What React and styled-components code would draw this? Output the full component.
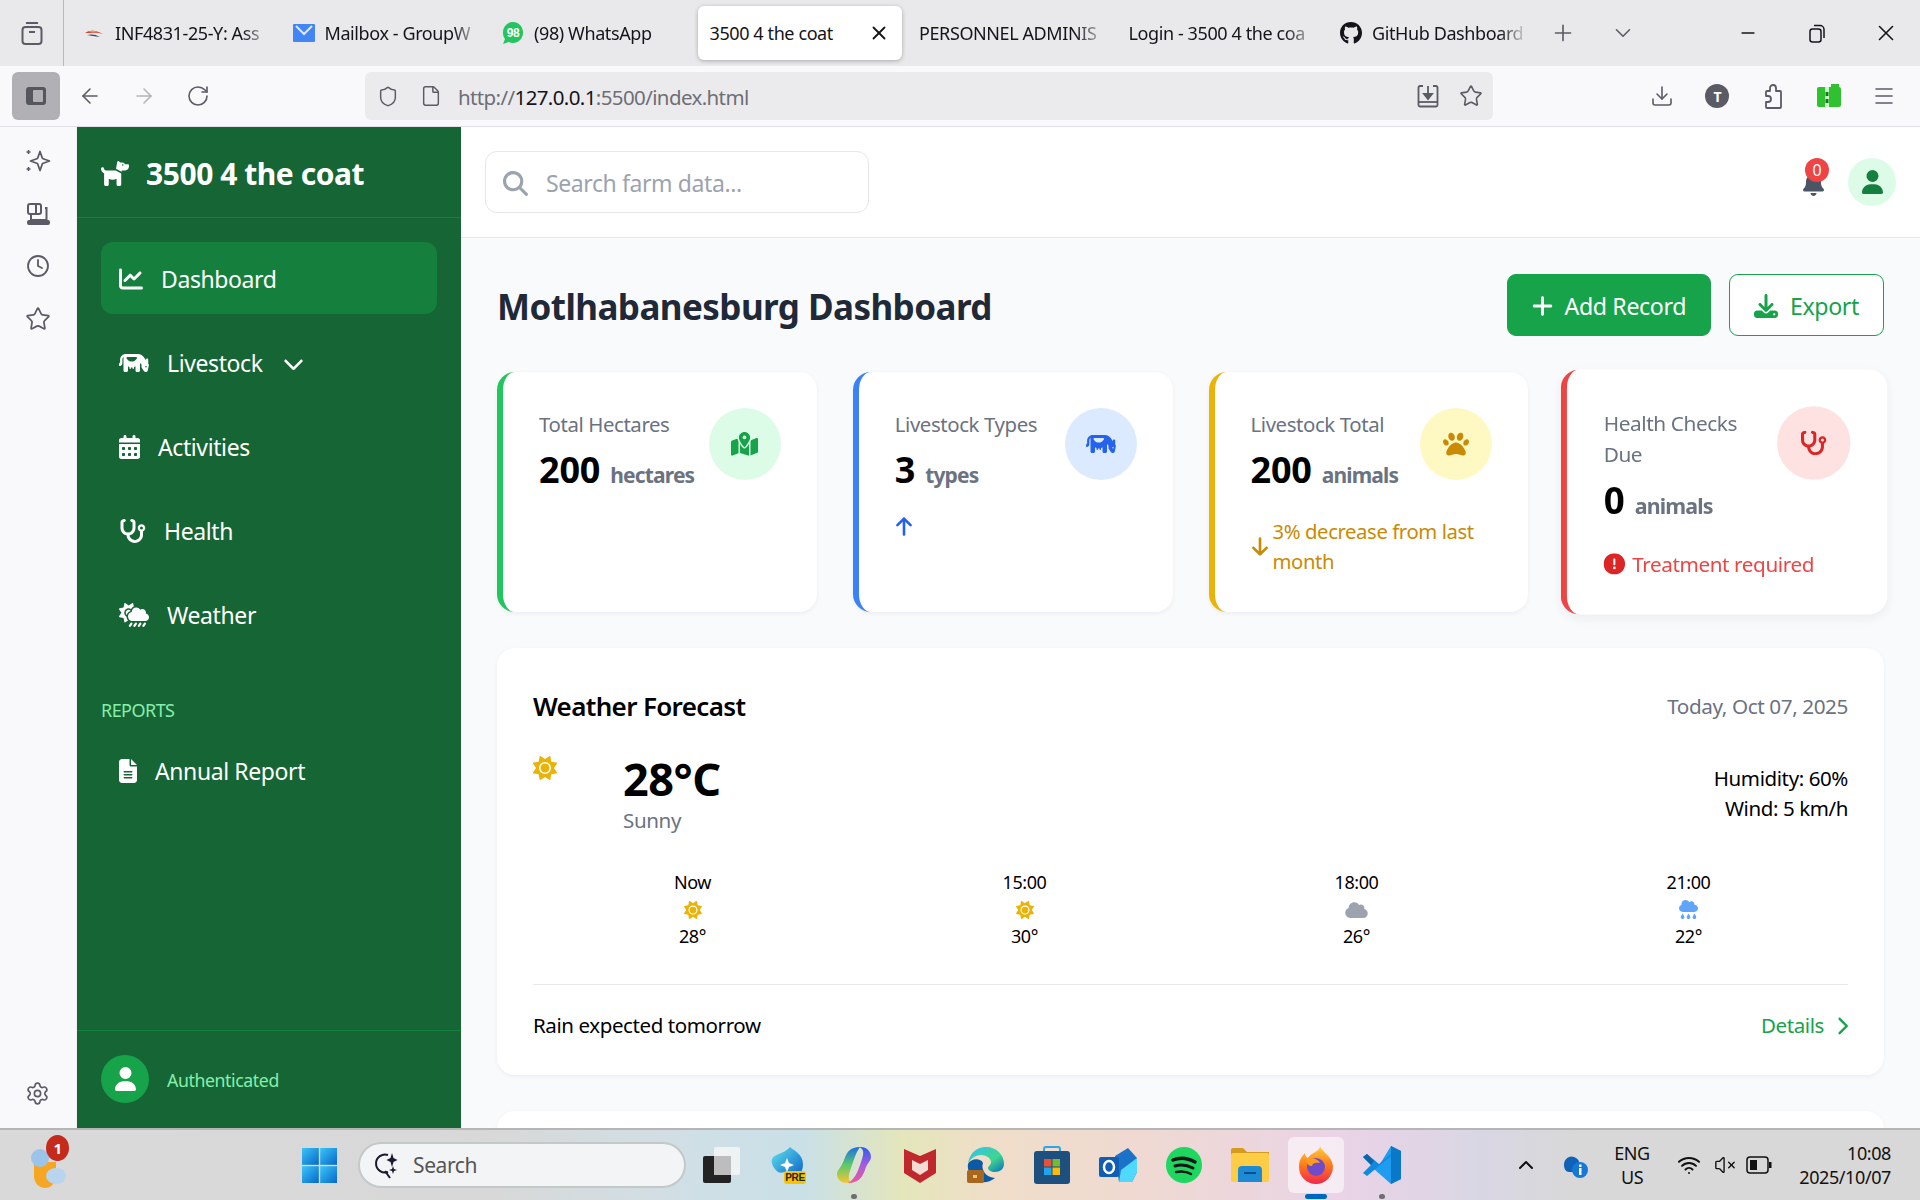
import React from "react";
import styled, { createGlobalStyle } from "styled-components";
import {
  FaDog, FaChartLine, FaChevronDown, FaCalendarDays, FaCloudSunRain, FaFileLines, FaUser, FaMagnifyingGlass,
  FaBell, FaPlus, FaDownload, FaPaw, FaSun, FaCloud, FaCloudRain, FaChevronRight, FaCircleExclamation, FaGithub,
  FaCow, FaStethoscope, FaMapLocationDot, FaArrowUp, FaArrowDown,
} from "react-icons/fa6";
import { ArrowLeft, ArrowRight, RotateCw, Shield, File, Star, Download, Menu, Clock, Settings, Plus, ChevronDown, X, Minus, ChevronUp, Wifi, VolumeX } from "lucide-react";

const FONT = `"Noto Sans", "Open Sans", sans-serif`;

const Global = createGlobalStyle`
  html, body { margin: 0; padding: 0; height: 1200px; overflow: hidden; }
  body { font-family: ${FONT}; letter-spacing: -0.025em; color: #000; }
  * { box-sizing: border-box; }
`;

const Screen = styled.div`
  width: 1920px; height: 1200px; display: flex; flex-direction: column; overflow: hidden;
`;

/* ---------- browser chrome ---------- */
const TabBar = styled.div`
  height: 66px; flex: none; background: #e9e9ec; display: flex; align-items: stretch; color: #15141a; font-size: 18px;
`;
const TabsButton = styled.div`
  width: 64px; flex: none; display: flex; align-items: center; justify-content: center;
  border-right: 1px solid #b9b9be; color: #5b5b66; margin-right: 5px;
`;
const Tabs = styled.div`
  display: flex; align-items: center; gap: 5.5px; margin-right: 3px;
`;
const Tab = styled.div`
  width: 204px; height: 54px; flex: none; display: flex; align-items: center; gap: 10px;
  padding: 0 ${p => (p.$active ? 12 : 2)}px 0 ${p => (p.$icon ? 14 : 12)}px;
  border-radius: 6px;
  ${p => p.$active && `background:#fff; box-shadow:0 1px 4px rgba(0,0,0,.28);`}
`;
const TabLabel = styled.span`
  flex: 1; white-space: nowrap; overflow: hidden;
  ${p => !p.$active && `-webkit-mask-image: linear-gradient(to right,#000 82%,transparent 100%); mask-image: linear-gradient(to right,#000 82%,transparent 100%);`}
`;
const TabFavicon = styled.span`
  width: 22px; height: 24px; flex: none; display: flex; align-items: center; justify-content: center;
`;
const TabStripButton = styled.div`
  width: 60px; flex: none; display: flex; align-items: center; justify-content: center; color: #5b5b66;
`;
const WindowControls = styled.div`
  margin-left: auto; display: flex; align-items: center; color: #15141a;
`;
const WindowButton = styled.div`
  width: 69px; display: flex; justify-content: center; align-items: center;
`;
const NavBar = styled.div`
  height: 61px; flex: none; background: #f9f9fb; display: flex; align-items: center; color: #5b5b66;
  border-bottom: 1px solid #e0e0e6;
`;
const SideToggle = styled.div`
  width: 48px; height: 48px; margin-left: 12px; background: #b1b1b5; border-radius: 6px;
  display: flex; align-items: center; justify-content: center;
`;
const NavButton = styled.div`
  width: 54px; display: flex; justify-content: center; color: ${p => (p.$off ? "#b4b4b9" : "#5b5b66")};
`;
const NavButtons = styled.div`
  display: flex; margin-left: 3px;
`;
const AddressBar = styled.div`
  width: 1128px; height: 48px; margin-left: 140px; background: #ebebee; border-radius: 6px;
  display: flex; align-items: center; padding-left: 12px; color: #5b5b66;
`;
const AddressIcon = styled.span`
  width: 22px; display: flex; justify-content: center; margin-right: ${p => p.$gap || 0}px;
`;
const Url = styled.span`
  font-size: 20.5px; color: #6e6e75; letter-spacing: -0.03em; padding-top: 2px;
  b { font-weight: 400; color: #15141a; }
`;
const AddressEnd = styled.div`
  margin-left: auto; display: flex; gap: 19px; padding-right: 10px; align-items: center;
`;
const Toolbar = styled.div`
  margin-left: 141px; height: 48px; display: flex; align-items: center;
`;
const ToolButton = styled.div`
  width: 55.6px; display: flex; justify-content: center; align-items: center;
`;
const ProfileDot = styled.div`
  width: 24px; height: 24px; border-radius: 50%; background: #5b5b66; color: #fff; font-size: 14px; font-weight: 700;
  display: flex; align-items: center; justify-content: center;
`;

/* ---------- body ---------- */
const Body = styled.div`
  flex: 1; min-height: 0; display: flex; overflow: hidden;
`;
const Rail = styled.div`
  width: 77px; flex: none; background: #f9f9fb; display: flex; flex-direction: column; align-items: center;
  padding: 21px 2px 22px 0; gap: 28px; color: #5b5b66; box-shadow: inset -2px 0 2px -2px rgba(0,0,0,.12);
`;
const RailEnd = styled.div`
  margin-top: auto; display: flex;
`;
const Sidebar = styled.aside`
  width: 384px; flex: none; background: #166534; color: #fff; display: flex; flex-direction: column;
`;
const Brand = styled.div`
  height: 91px; flex: none; padding: 2px 24px 0; display: flex; align-items: center; gap: 17px; border-bottom: 1.5px solid #15803d;
  font-size: 30px; font-weight: 700; letter-spacing: -0.015em;
`;
const SideNav = styled.nav`
  padding: 24px; display: flex; flex-direction: column; gap: 12px;
`;
const NavItem = styled.div`
  height: 72px; padding: ${p => (p.$flat ? 0 : 2)}px 18px 0; border-radius: 12px; display: flex; align-items: center; gap: 18px; font-size: 23px;
  background: ${p => (p.$active ? "#15803d" : "transparent")};
`;
const NavCaret = styled.span`
  display: flex; margin-left: 2px;
`;
const SectionLabel = styled.div`
  font-size: 18px; line-height: 27px; color: #86efac; margin: 35px 0 -1px; letter-spacing: -0.03em;
`;
const SideFooter = styled.div`
  margin-top: auto; height: 98px; flex: none; border-top: 1.5px solid #15803d; padding: 24px; display: flex; align-items: flex-start; gap: 18px;
`;
const SideAvatar = styled.div`
  width: 48px; height: 48px; border-radius: 50%; background: #16a34a; display: flex; align-items: center; justify-content: center;
`;
const AuthText = styled.span`
  font-size: 17.7px; line-height: 50px; color: #86efac;
`;
const Glyph = styled.span`
  display: inline-flex; flex: none; color: ${p => p.$color || "inherit"};
  svg { width: ${p => p.$w}px; height: ${p => p.$h || p.$w}px; display: block; }
`;

const Main = styled.main`
  flex: 1; min-width: 0; display: flex; flex-direction: column; background: #f9fafb; overflow: hidden;
`;
const TopHeader = styled.header`
  height: 111px; flex: none; background: #fff; border-bottom: 1.5px solid #e5e7eb; padding: 24px 24px 0; display: flex; align-items: flex-start;
`;
const SearchBox = styled.div`
  width: 384px; height: 62px; border: 1.5px solid #e5e7eb; border-radius: 12px; display: flex; align-items: center; gap: 18px; padding: 2px 0 0 17px;
  font-size: 23px; color: #9ca3af;
`;
const HeaderEnd = styled.div`
  margin-left: auto; height: 62px; display: flex; align-items: center; gap: 24px;
`;
const Bell = styled.div`
  position: relative; display: flex; margin-top: 3px; color: #4b5563;
`;
const Badge = styled.span`
  position: absolute; left: 2px; top: -14px; width: 24px; height: 24px; border-radius: 50%; background: #ef4444; color: #fff;
  font-size: 16px; display: flex; align-items: center; justify-content: center;
`;
const UserBubble = styled.div`
  width: 48px; height: 48px; border-radius: 50%; background: #dcfce7; display: flex; align-items: center; justify-content: center; color: #15803d;
`;
const Content = styled.div`
  padding: 36px 36px 0; display: flex; flex-direction: column; flex: none;
`;
const TitleRow = styled.div`
  height: 62px; display: flex; align-items: center; justify-content: space-between; margin-bottom: 36px;
`;
const PageTitle = styled.h1`
  margin: 0; font-size: 35px; font-weight: 700; color: #1f2937; letter-spacing: -0.016em; padding-top: 2px;
`;
const Actions = styled.div`
  display: flex; gap: 18px;
`;
const Button = styled.div`
  height: 62px; padding: 2px 24px 0; border-radius: 9px; display: flex; align-items: center; gap: 12px; font-size: 23.2px;
  background: ${p => (p.$primary ? "#16a34a" : "#fff")}; color: ${p => (p.$primary ? "#fff" : "#16a34a")};
  border: 1.5px solid #16a34a;
`;
const StatGrid = styled.div`
  display: grid; grid-template-columns: repeat(4, 1fr); gap: 36px; margin-bottom: 36px;
`;
const StatCard = styled.div`
  height: 240px; background: #fff; border-radius: 18px; border-left: 6px solid ${p => p.$accent};
  box-shadow: 0 1.5px 4px rgba(0,0,0,.05); padding: 36px 36px 0;
  ${p => p.$raised && `transform: scale(1.02); box-shadow: 0 4px 10px rgba(0,0,0,.05);`}
`;
const StatTop = styled.div`
  display: flex; justify-content: space-between; align-items: flex-start; gap: 12px;
`;
const StatLabel = styled.div`
  font-size: 20.4px; line-height: 31px; color: #6b7280; margin: 1px 0 6px;
`;
const StatValue = styled.div`
  font-size: 36px; line-height: 48px; font-weight: 700; color: #000; display: flex; align-items: baseline; gap: 10px; letter-spacing: -0.005em;
`;
const StatUnit = styled.span`
  font-size: 21px; font-weight: 700; color: #6b7280; letter-spacing: -0.04em;
`;
const StatIcon = styled.div`
  width: 72px; height: 72px; flex: none; border-radius: 50%; background: ${p => p.$bg}; color: ${p => p.$fg};
  display: flex; align-items: center; justify-content: center;
`;
const Trend = styled.div`
  margin-top: 17px; display: flex; align-items: center; gap: ${p => p.$gap || 4}px; font-size: 20.3px; line-height: 30px; color: ${p => p.$color};
`;
const Panel = styled.section`
  background: #fff; border-radius: 18px; box-shadow: 0 1.5px 4px rgba(0,0,0,.05); padding: 36px 36px 34px; margin-bottom: 36px;
`;
const PanelHead = styled.div`
  height: 45px; padding-bottom: 2px; display: flex; align-items: center; justify-content: space-between; margin-bottom: 24px;
`;
const PanelTitle = styled.h2`
  margin: 0; font-size: 26px; font-weight: 600; color: #000; letter-spacing: -0.025em;
`;
const Muted = styled.span`
  font-size: 20.7px; color: #6b7280;
`;
const NowRow = styled.div`
  height: 83px; display: flex; align-items: center; justify-content: space-between; margin-bottom: 33px;
`;
const NowLeft = styled.div`
  display: flex; align-items: flex-start; gap: 66px; height: 100%;
`;
const SunSlot = styled.div`
  padding-top: 3px; display: flex;
`;
const Temp = styled.div`
  font-size: 45px; line-height: 54px; font-weight: 700; letter-spacing: -0.01em; margin-top: -1px;
`;
const Condition = styled.div`
  font-size: 20.6px; line-height: 28px; color: #6b7280;
`;
const NowRight = styled.div`
  text-align: right; font-size: 20.5px; line-height: 30px; margin-top: -4px;
`;
const Hours = styled.div`
  display: flex; justify-content: center; margin-bottom: 34px;
`;
const Hour = styled.div`
  width: 332px; flex: none; display: flex; flex-direction: column; align-items: center; font-size: 18px; line-height: 27px;
`;
const HourIcon = styled.div`
  height: 27px; display: flex; align-items: center;
`;
const PanelFoot = styled.div`
  border-top: 1.5px solid #e5e7eb; padding-top: 25px; display: flex; justify-content: space-between; align-items: center; font-size: 20.5px; line-height: 31px;
`;
const DetailsLink = styled.span`
  color: #16a34a; display: flex; align-items: center; gap: 12px;
`;
const NextPanel = styled.section`
  height: 200px; background: #fff; border-radius: 18px 18px 0 0; box-shadow: 0 1.5px 4px rgba(0,0,0,.05);
`;

/* ---------- taskbar ---------- */
const Taskbar = styled.div`
  height: 72px; flex: none; border-top: 2px solid #b5b5b5; display: flex; align-items: center; padding-left: 30px; padding-right: 29px; color: #111;
  background: linear-gradient(90deg,#d9d9d9 0%,#d8d8d8 26%,#d0dfe6 36%,#c9e0e6 42%,#e4e6bb 47%,#f0ddc9 52%,#efd9d3 60%,#e9d3e6 70%,#d9d6e4 77%,#d8d8d8 82%,#d8d8d8 100%);
`;
const Widget = styled.div`
  position: relative; width: 40px; height: 46px; display: flex;
`;
const WidgetBadge = styled.span`
  position: absolute; left: 16px; top: -7px; width: 23px; height: 26px; border-radius: 50%; background: #c42b1c; color: #fff; font-size: 15px; font-weight: 700;
  display: flex; align-items: center; justify-content: center;
`;
const StartButton = styled.div`
  width: 35px; margin-left: 232px; display: flex;
`;
const TaskSearch = styled.div`
  width: 328px; height: 46px; margin-left: 21px; border-radius: 23px; background: #f2f4f6; border: 2px solid #c3c8c9; display: flex; align-items: center; gap: 13px; padding-left: 14px;
  font-size: 21px; color: #555;
`;
const Apps = styled.div`
  display: flex; margin-left: 3px;
`;
const AppSlot = styled.div`
  position: relative; width: 66px; height: 56px; display: flex; align-items: center; justify-content: center; border-radius: 6px;
  ${p => p.$open && `background: rgba(255,255,255,.55); width: 56px; margin: 0 5px;`}
`;
const Pip = styled.span`
  position: absolute; bottom: -6px; left: 50%; transform: translateX(-50%); height: 5px; border-radius: 3px;
  width: ${p => (p.$wide ? 22 : 6)}px; background: ${p => (p.$wide ? "#0067c0" : "#6e6e6e")};
`;
const Tray = styled.div`
  margin-left: auto; display: flex; align-items: center;
`;
const TrayCell = styled.div`
  width: ${p => p.$w}px; display: flex; justify-content: center; align-items: center; flex-direction: column; font-size: 18px; line-height: 24px;
`;
const ClockCell = styled.div`
  width: 106px; text-align: right; font-size: 18px; line-height: 24px;
`;

/* ---------- drawings ---------- */
const SidebarGlyph = () => (
  <svg width="24" height="24" viewBox="0 0 24 24"><rect x="2" y="3" width="20" height="18" rx="3" fill="#56565f" /><rect x="9" y="6" width="10" height="12" rx="1" fill="#b1b1b5" /></svg>
);
const TabsGlyph = () => (
  <svg width="24" height="26" viewBox="0 0 24 26" fill="none" stroke="currentColor" strokeWidth="2"><path d="M6 3h12" /><rect x="2.5" y="7" width="19" height="17" rx="3" /><path d="M9 12h6" /></svg>
);
const StarSpark = () => (
  <svg width="26" height="26" viewBox="0 0 26 26" fill="none" stroke="currentColor" strokeWidth="1.8" strokeLinejoin="round"><path d="M15 3.500l2.500 7 7 2.500-7 2.500-2.500 7-2.500-7-7-2.500 7-2.500z" /><path d="M3.500 2v4M1.500 4h4M3.500 19v4M1.500 21h4" strokeWidth="1.500" /></svg>
);
const SyncGlyph = () => (
  <svg width="24" height="24" viewBox="0 0 24 24" fill="none" stroke="currentColor" strokeWidth="2"><rect x="2" y="2" width="13" height="10" rx="2" /><path d="M10 2v10" /><path d="M19 6h1.500v12M5 12v6h16" /><rect x="2" y="19" width="21" height="3" rx="1" fill="currentColor" /></svg>
);
const PuzzleGlyph = () => (
  <svg width="24" height="26" viewBox="0 0 24 26" fill="none" stroke="currentColor" strokeWidth="1.8" strokeLinejoin="round"><path d="M9 5a3 3 0 0 1 6 0v3h4a1 1 0 0 1 1 1v15a1 1 0 0 1-1 1H6a1 1 0 0 1-1-1v-5h2a3 3 0 0 0 0-6H5V9a1 1 0 0 1 1-1h3z" /></svg>
);
const SaveGlyph = () => (
  <svg width="24" height="24" viewBox="0 0 24 24" fill="none" stroke="currentColor" strokeWidth="1.8"><path d="M7 2H4a1.500 1.500 0 0 0-1.500 1.500V21A1.500 1.500 0 0 0 4 22.500h16a1.500 1.500 0 0 0 1.500-1.500V3.500A1.500 1.500 0 0 0 20 2h-3" /><path d="M12 2v10" /><path d="M8 10l4 5 4-5z" fill="currentColor" /><path d="M3 18h18" /></svg>
);
const RestoreGlyph = () => (
  <svg width="18" height="20" viewBox="0 0 18 20" fill="none" stroke="currentColor" strokeWidth="1.500"><rect x="2" y="6" width="11" height="13" rx="2.500" /><path d="M6 2.500h6a4 4 0 0 1 4 4V15" /></svg>
);
const BatteryExt = () => (
  <svg width="26" height="26" viewBox="0 0 26 26"><rect x="1" y="4" width="24" height="20" rx="2" fill="#2fc12f" /><rect x="15" y="1" width="8" height="4" fill="#2fc12f" /><rect x="9" y="4" width="4" height="20" fill="#c9f7c9" /><rect x="9.500" y="9" width="3" height="4" fill="#177a17" /><rect x="9.500" y="16" width="3" height="4" fill="#177a17" /></svg>
);
const MoodleIcon = () => (
  <svg width="20" height="12" viewBox="0 0 20 12"><path d="M1 6c5-3 10-3 18 1-6-2-11-1-18-1z" fill="#d9462e" /><path d="M3 8c4-1 8-1 13 2-5-1-9-1-13-2z" fill="#39405c" /><path d="M5 5c2-2 5-2 7 0z" fill="#e5a13b" /></svg>
);
const MailIcon = () => (
  <svg width="22" height="20" viewBox="0 0 22 20"><rect x="0" y="1" width="22" height="18" rx="1" fill="#4285f4" /><path d="M3 3l8 8 8-8" fill="none" stroke="#dfe8fb" strokeWidth="2" /></svg>
);
const WhatsAppIcon = () => (
  <svg width="22" height="24" viewBox="0 0 22 24"><path d="M11 1c5.500 0 10 4.500 10 10.500S16.500 22 11 22c-1.500 0-3-.3-4.500-1L1 23l2-5C1.500 16 1 14 1 11.500 1 5.500 5.500 1 11 1z" fill="#22c55e" /><text x="11" y="16" textAnchor="middle" fontSize="12" fontWeight="700" fill="#fff" fontFamily="Liberation Sans">98</text></svg>
);
const WeatherBlob = () => (
  <svg width="40" height="46" viewBox="0 0 40 46"><path d="M4 20h22v14c0 8-6 12-11 12-6 0-11-5-11-12z" fill="#f6a623" /><ellipse cx="10" cy="16" rx="9" ry="9" fill="#9cc4ea" /><ellipse cx="26" cy="34" rx="10" ry="8" fill="#b8d4ee" /></svg>
);
const WindowsLogo = () => (
  <svg width="35" height="35" viewBox="0 0 35 35">
    <defs><linearGradient id="wl" x1="0" y1="0" x2="1" y2="1"><stop offset="0" stopColor="#3bc5f8" /><stop offset="1" stopColor="#0668c9" /></linearGradient></defs>
    <rect width="16.800" height="16.800" fill="url(#wl)" /><rect x="18.200" width="16.800" height="16.800" fill="url(#wl)" /><rect y="18.200" width="16.800" height="16.800" fill="url(#wl)" /><rect x="18.200" y="18.200" width="16.800" height="16.800" fill="url(#wl)" />
  </svg>
);
const SearchSpark = () => (
  <svg width="26" height="30" viewBox="0 0 26 30" fill="none" stroke="#1a1a2e" strokeWidth="2"><path d="M14 5a9 9 0 1 0 0 17" /><path d="M11 21l5 7" /><path d="M18 3l1.500 5 4 2-4 2-1.500 5-1.500-5-4-2 4-2z" fill="#1a1a2e" stroke="none" /><path d="M19 16l1 3 3 1-3 1-1 3-1-3-3-1 3-1z" fill="#1a1a2e" stroke="none" /></svg>
);
const TaskView = () => (
  <svg width="38" height="36" viewBox="0 0 38 36"><rect x="11" y="0" width="26" height="28" rx="2" fill="#f7f7f7" fillOpacity=".8" /><rect x="0" y="9" width="28" height="27" rx="2" fill="#232323" /><rect x="11" y="9" width="17" height="19" fill="#bdbdbd" /></svg>
);
const AzureIcon = () => (
  <svg width="38" height="38" viewBox="0 0 38 38">
    <defs><linearGradient id="az" x1="0" y1="0" x2="1" y2="1"><stop offset="0" stopColor="#5fe3ef" /><stop offset="1" stopColor="#0a5fc4" /></linearGradient></defs>
    <path d="M21 1c3 3 13 7 13 17 0 10-6 13-12 15-4-4-3-6-4-8-4 2-7 2-9 1-6-5-7-10-6-13C5 8 15 8 21 1z" fill="url(#az)" /><path d="M18 12l2 5 5 2-5 2-2 5-2-5-5-2 5-2z" fill="#fff" /><rect x="15" y="25" width="22" height="13" rx="3" fill="#f8c400" /><text x="26" y="35" textAnchor="middle" fontSize="10" fontWeight="800" fill="#222" fontFamily="Liberation Sans">PRE</text>
  </svg>
);
const CopilotIcon = () => (
  <svg width="36" height="38" viewBox="0 0 36 38">
    <defs>
      <linearGradient id="cp1" x1="0" y1="0" x2="0" y2="1"><stop offset="0" stopColor="#1a6fe8" /><stop offset=".5" stopColor="#5cc96a" /><stop offset="1" stopColor="#f6c532" /></linearGradient>
      <linearGradient id="cp2" x1="0" y1="0" x2="0" y2="1"><stop offset="0" stopColor="#2a5cf0" /><stop offset=".5" stopColor="#a65be0" /><stop offset="1" stopColor="#f0559b" /></linearGradient>
    </defs>
    <path d="M24 1c-10 0-13 5-16 13C5 22 1 24 1 28c0 6 5 9 10 9h6c-5-2-5-6-3-12 3-8 5-17 10-24z" fill="url(#cp1)" />
    <path d="M12 37c10 0 14-5 17-13 2-7 6-9 6-13 0-6-5-10-10-10h-2c5 2 5 6 3 12-3 9-6 20-14 24z" fill="url(#cp2)" />
  </svg>
);
const McAfeeIcon = () => (
  <svg width="32" height="36" viewBox="0 0 32 36"><path d="M0 2l16 7 16-7v24l-16 10L0 26z" fill="#c0282d" /><path d="M8 13l8 4 8-4v10l-8 5-8-5z" fill="#f3dcd4" /></svg>
);
const EdgeIcon = () => (
  <svg width="38" height="38" viewBox="0 0 38 38">
    <defs><linearGradient id="ed" x1="0" y1="0" x2="1" y2="1"><stop offset="0" stopColor="#35c1f1" /><stop offset=".6" stopColor="#3ed68f" /><stop offset="1" stopColor="#0a6ebd" /></linearGradient></defs>
    <path d="M19 1c11 0 18 8 18 17 0 5-4 8-9 8-4 0-7-2-7-4 0-2 3-3 3-6 0-4-5-7-10-7C8 9 2 14 1 18 2 8 9 1 19 1z" fill="url(#ed)" /><path d="M1 18c3-6 13-6 15-1-2 5 1 14 12 15-6 5-15 6-20 1C3 29 0 24 1 18z" fill="#0c59a4" /><rect x="0" y="24" width="17" height="13" rx="2" fill="#a9661f" /><rect x="6" y="29" width="4" height="3" fill="#f2c469" />
  </svg>
);
const StoreIcon = () => (
  <svg width="36" height="38" viewBox="0 0 36 38"><path d="M10 6V3a2 2 0 0 1 2-2h12a2 2 0 0 1 2 2v3" fill="none" stroke="#28a8ea" strokeWidth="2" /><rect x="0" y="5" width="36" height="33" rx="3" fill="#1d4f7f" /><rect x="10" y="13" width="7.500" height="7.500" fill="#e8503a" /><rect x="18.500" y="13" width="7.500" height="7.500" fill="#7cb82f" /><rect x="10" y="21.500" width="7.500" height="7.500" fill="#1fa5ea" /><rect x="18.500" y="21.500" width="7.500" height="7.500" fill="#fbbc09" /></svg>
);
const OutlookIcon = () => (
  <svg width="38" height="34" viewBox="0 0 38 34"><path d="M16 8l13-8 9 10v14l-5 10H20z" fill="#1a73c9" /><path d="M22 22l16-12v14l-5 10H20z" fill="#50d9ff" /><rect x="0" y="9" width="20" height="20" rx="2" fill="#0f5db5" /><ellipse cx="10" cy="19" rx="5" ry="6" fill="none" stroke="#fff" strokeWidth="2.500" /></svg>
);
const SpotifyIcon = () => (
  <svg width="36" height="36" viewBox="0 0 36 36" fill="none" stroke="#151515" strokeLinecap="round"><circle cx="18" cy="18" r="18" fill="#1ed760" stroke="none" /><path d="M7 13c7-3 15-2 22 2" strokeWidth="3.500" /><path d="M9 19c6-2 12-1 18 2" strokeWidth="3" /><path d="M10 25c5-1 10-1 15 2" strokeWidth="2.500" /></svg>
);
const FolderIcon = () => (
  <svg width="38" height="34" viewBox="0 0 38 34"><path d="M0 2a2 2 0 0 1 2-2h10l4 4h22v6H0z" fill="#d69a1d" /><rect x="0" y="5" width="38" height="29" rx="2" fill="#fccd45" /><path d="M7 22a4 4 0 0 1 4-4h16a4 4 0 0 1 4 4v12H7z" fill="#1d8ad6" /><rect x="13" y="24" width="12" height="2" fill="#0b4f8a" /></svg>
);
const FirefoxIcon = () => (
  <svg width="36" height="38" viewBox="0 0 36 38">
    <defs><linearGradient id="ff" x1="0" y1="0" x2="0" y2="1"><stop offset="0" stopColor="#ffd23f" /><stop offset=".5" stopColor="#ff7a1a" /><stop offset="1" stopColor="#f0274f" /></linearGradient></defs>
    <path d="M22 0c1 5 12 10 13 20 0 11-8 18-17 18S1 31 1 21C1 14 4 10 7 7c0 3 1 4 3 5 3-6 12-6 12-12z" fill="url(#ff)" /><circle cx="18" cy="21" r="9" fill="#6f4bc9" /><path d="M8 15c4-4 12-3 14 2-4-1-8 0-8 3-3 0-5-2-6-5z" fill="#ff9c1f" />
  </svg>
);
const VSCodeIcon = () => (
  <svg width="38" height="38" viewBox="0 0 38 38"><path d="M28 0l10 5v28l-10 5-17-15 6-5z" fill="#1f9cf0" /><path d="M28 0v38l10-5V5z" fill="#0a78c8" /><path d="M28 10L10 25l-6 5-4-3 8-8-8-8 4-3 6 5 6 5 12-10z" fill="#0f8ae0" /><path d="M11 15L4 8 0 11l8 8z" fill="#0a66ad" /></svg>
);
const CloudInfo = () => (
  <svg width="28" height="28" viewBox="0 0 28 28"><path d="M3 14c0-6 5-10 10-8 3 1 5 3 5 5v10H8c-3 0-5-3-5-7z" fill="#0f62b8" /><circle cx="19" cy="19" r="8" fill="#1478d4" /><rect x="18" y="17" width="2.500" height="7" fill="#fff" /><rect x="18" y="13.500" width="2.500" height="2.500" fill="#fff" /></svg>
);
const BatteryTray = () => (
  <svg width="26" height="18" viewBox="0 0 26 18" fill="none"><rect x="1" y="1" width="21" height="16" rx="3" stroke="#111" strokeWidth="1.500" /><rect x="4" y="4" width="7" height="10" fill="#111" /><rect x="23" y="6" width="2.500" height="6" fill="#111" /></svg>
);

const chrome = { size: 24, strokeWidth: 1.6 };

export default function AppRoot() {
  return (
    <Screen>
      <Global />
      <TabBar>
        <TabsButton><TabsGlyph /></TabsButton>
        <Tabs>
          <Tab $icon><TabFavicon><MoodleIcon /></TabFavicon><TabLabel>INF4831-25-Y: Ass</TabLabel></Tab>
          <Tab $icon><TabFavicon><MailIcon /></TabFavicon><TabLabel>Mailbox - GroupW</TabLabel></Tab>
          <Tab $icon><TabFavicon><WhatsAppIcon /></TabFavicon><TabLabel>(98) WhatsApp</TabLabel></Tab>
          <Tab $active><TabLabel $active>3500 4 the coat</TabLabel><X size={22} strokeWidth={2} /></Tab>
          <Tab><TabLabel>PERSONNEL ADMINIS</TabLabel></Tab>
          <Tab><TabLabel>Login - 3500 4 the coa</TabLabel></Tab>
          <Tab $icon><TabFavicon><FaGithub size={24} /></TabFavicon><TabLabel>GitHub Dashboard</TabLabel></Tab>
        </Tabs>
        <TabStripButton><Plus size={26} strokeWidth={1.5} /></TabStripButton>
        <TabStripButton><ChevronDown size={26} strokeWidth={1.5} /></TabStripButton>
        <WindowControls>
          <WindowButton><Minus size={20} strokeWidth={2} /></WindowButton>
          <WindowButton><RestoreGlyph /></WindowButton>
          <WindowButton><X size={26} strokeWidth={1.5} /></WindowButton>
        </WindowControls>
      </TabBar>
      <NavBar>
        <SideToggle><SidebarGlyph /></SideToggle>
        <NavButtons>
          <NavButton><ArrowLeft {...chrome} /></NavButton>
          <NavButton $off><ArrowRight {...chrome} /></NavButton>
          <NavButton><RotateCw {...chrome} /></NavButton>
        </NavButtons>
        <AddressBar>
          <AddressIcon $gap={21}><Shield size={27} strokeWidth={1.6} /></AddressIcon>
          <AddressIcon $gap={16}><File {...chrome} /></AddressIcon>
          <Url>http://<b>127.0.0.1</b>:5500/index.html</Url>
          <AddressEnd><SaveGlyph /><Star {...chrome} /></AddressEnd>
        </AddressBar>
        <Toolbar>
          <ToolButton><Download {...chrome} /></ToolButton>
          <ToolButton><ProfileDot>T</ProfileDot></ToolButton>
          <ToolButton><PuzzleGlyph /></ToolButton>
          <ToolButton><BatteryExt /></ToolButton>
          <ToolButton><Menu {...chrome} /></ToolButton>
        </Toolbar>
      </NavBar>

      <Body>
        <Rail>
          <StarSpark />
          <SyncGlyph />
          <Clock size={24} strokeWidth={1.8} />
          <Star size={26} strokeWidth={1.6} />
          <RailEnd><Settings size={25} strokeWidth={1.6} /></RailEnd>
        </Rail>

        <Sidebar>
          <Brand><Glyph $w={28} $h={25}><FaDog /></Glyph>3500 4 the coat</Brand>
          <SideNav>
            <NavItem $active><Glyph $w={24}><FaChartLine /></Glyph>Dashboard</NavItem>
            <NavItem><Glyph $w={30} $h={24}><FaCow /></Glyph>Livestock<NavCaret><Glyph $w={21}><FaChevronDown /></Glyph></NavCaret></NavItem>
            <NavItem><Glyph $w={21} $h={24}><FaCalendarDays /></Glyph>Activities</NavItem>
            <NavItem><Glyph $w={27} $h={24}><FaStethoscope /></Glyph>Health</NavItem>
            <NavItem><Glyph $w={30} $h={24}><FaCloudSunRain /></Glyph>Weather</NavItem>
            <SectionLabel>REPORTS</SectionLabel>
            <NavItem $flat><Glyph $w={18} $h={24}><FaFileLines /></Glyph>Annual Report</NavItem>
          </SideNav>
          <SideFooter>
            <SideAvatar><Glyph $w={21} $h={24}><FaUser /></Glyph></SideAvatar>
            <AuthText>Authenticated</AuthText>
          </SideFooter>
        </Sidebar>

        <Main>
          <TopHeader>
            <SearchBox><Glyph $w={25} $color="#9ca3af"><FaMagnifyingGlass /></Glyph>Search farm data...</SearchBox>
            <HeaderEnd>
              <Bell><Glyph $w={21} $h={24}><FaBell /></Glyph><Badge>0</Badge></Bell>
              <UserBubble><Glyph $w={21} $h={24}><FaUser /></Glyph></UserBubble>
            </HeaderEnd>
          </TopHeader>
          <Content>
            <TitleRow>
              <PageTitle>Motlhabanesburg Dashboard</PageTitle>
              <Actions>
                <Button $primary><Glyph $w={21} $h={24}><FaPlus /></Glyph>Add Record</Button>
                <Button><Glyph $w={24}><FaDownload /></Glyph>Export</Button>
              </Actions>
            </TitleRow>
            <StatGrid>
              <StatCard $accent="#22c55e">
                <StatTop>
                  <div>
                    <StatLabel>Total Hectares</StatLabel>
                    <StatValue>200 <StatUnit>hectares</StatUnit></StatValue>
                  </div>
                  <StatIcon $bg="#dcfce7" $fg="#16a34a"><Glyph $w={27} $h={24}><FaMapLocationDot /></Glyph></StatIcon>
                </StatTop>
              </StatCard>
              <StatCard $accent="#3b82f6">
                <StatTop>
                  <div>
                    <StatLabel>Livestock Types</StatLabel>
                    <StatValue>3 <StatUnit>types</StatUnit></StatValue>
                  </div>
                  <StatIcon $bg="#dbeafe" $fg="#2563eb"><Glyph $w={30} $h={24}><FaCow /></Glyph></StatIcon>
                </StatTop>
                <Trend $color="#2563eb"><Glyph $w={18} $h={21}><FaArrowUp /></Glyph></Trend>
              </StatCard>
              <StatCard $accent="#eab308">
                <StatTop>
                  <div>
                    <StatLabel>Livestock Total</StatLabel>
                    <StatValue>200 <StatUnit>animals</StatUnit></StatValue>
                  </div>
                  <StatIcon $bg="#fef9c3" $fg="#ca8a04"><Glyph $w={26}><FaPaw /></Glyph></StatIcon>
                </StatTop>
                <Trend $color="#ca8a04"><Glyph $w={18} $h={21}><FaArrowDown /></Glyph><span>3% decrease from last month</span></Trend>
              </StatCard>
              <StatCard $accent="#ef4444" $raised>
                <StatTop>
                  <div>
                    <StatLabel>Health Checks Due</StatLabel>
                    <StatValue>0 <StatUnit>animals</StatUnit></StatValue>
                  </div>
                  <StatIcon $bg="#fee2e2" $fg="#dc2626"><Glyph $w={27} $h={24}><FaStethoscope /></Glyph></StatIcon>
                </StatTop>
                <Trend $color="#ef4444" $gap={7}><Glyph $w={21} $color="#dc2626"><FaCircleExclamation /></Glyph><span>Treatment required</span></Trend>
              </StatCard>
            </StatGrid>

            <Panel>
              <PanelHead>
                <PanelTitle>Weather Forecast</PanelTitle>
                <Muted>Today, Oct 07, 2025</Muted>
              </PanelHead>
              <NowRow>
                <NowLeft>
                  <SunSlot><Glyph $w={24} $color="#eab308"><FaSun /></Glyph></SunSlot>
                  <div>
                    <Temp>28°C</Temp>
                    <Condition>Sunny</Condition>
                  </div>
                </NowLeft>
                <NowRight>Humidity: 60%<br />Wind: 5 km/h</NowRight>
              </NowRow>
              <Hours>
                <Hour>Now<HourIcon><Glyph $w={18} $color="#eab308"><FaSun /></Glyph></HourIcon>28°</Hour>
                <Hour>15:00<HourIcon><Glyph $w={18} $color="#eab308"><FaSun /></Glyph></HourIcon>30°</Hour>
                <Hour>18:00<HourIcon><Glyph $w={23} $h={18} $color="#9ca3af"><FaCloud /></Glyph></HourIcon>26°</Hour>
                <Hour>21:00<HourIcon><Glyph $w={19} $h={19} $color="#60a5fa"><FaCloudRain /></Glyph></HourIcon>22°</Hour>
              </Hours>
              <PanelFoot>
                <span>Rain expected tomorrow</span>
                <DetailsLink>Details<Glyph $w={12} $h={20}><FaChevronRight /></Glyph></DetailsLink>
              </PanelFoot>
            </Panel>
            <NextPanel />
          </Content>
        </Main>
      </Body>

      <Taskbar>
        <Widget><WeatherBlob /><WidgetBadge>1</WidgetBadge></Widget>
        <StartButton><WindowsLogo /></StartButton>
        <TaskSearch><SearchSpark />Search</TaskSearch>
        <Apps>
          <AppSlot><TaskView /></AppSlot>
          <AppSlot><AzureIcon /></AppSlot>
          <AppSlot><CopilotIcon /><Pip /></AppSlot>
          <AppSlot><McAfeeIcon /></AppSlot>
          <AppSlot><EdgeIcon /></AppSlot>
          <AppSlot><StoreIcon /></AppSlot>
          <AppSlot><OutlookIcon /></AppSlot>
          <AppSlot><SpotifyIcon /></AppSlot>
          <AppSlot><FolderIcon /></AppSlot>
          <AppSlot $open><FirefoxIcon /><Pip $wide /></AppSlot>
          <AppSlot><VSCodeIcon /><Pip /></AppSlot>
        </Apps>
        <Tray>
          <TrayCell $w={42}><ChevronUp size={24} strokeWidth={2} /></TrayCell>
          <TrayCell $w={56}><CloudInfo /></TrayCell>
          <TrayCell $w={58}><span>ENG</span><span>US</span></TrayCell>
          <TrayCell $w={56}><Wifi size={24} strokeWidth={2} /></TrayCell>
          <TrayCell $w={16}><VolumeX size={22} strokeWidth={1.5} /></TrayCell>
          <TrayCell $w={52}><BatteryTray /></TrayCell>
          <ClockCell>10:08<br />2025/10/07</ClockCell>
        </Tray>
      </Taskbar>
    </Screen>
  );
}
